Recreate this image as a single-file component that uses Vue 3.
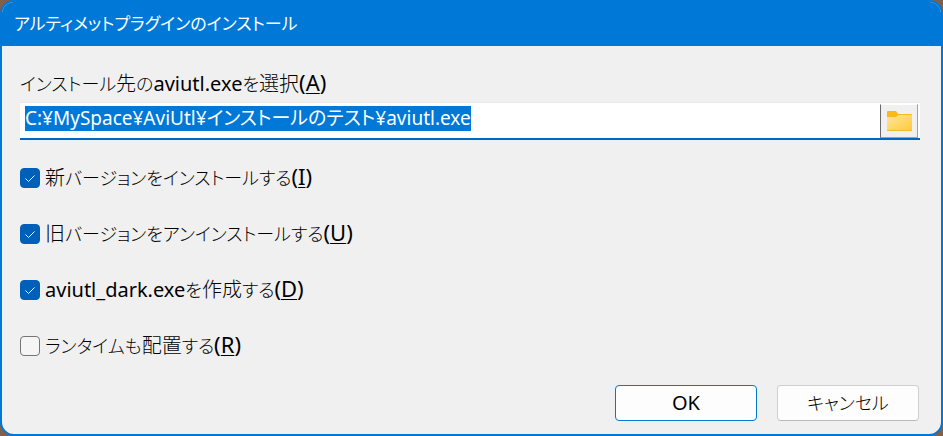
<script setup>
import { onMounted, ref } from 'vue'

const path = ref('C:¥MySpace¥AviUtl¥インストールのテスト¥aviutl.exe')
const pathInput = ref(null)

const options = ref([
  { id: 'install', file: '', kanji: '新', text: 'バージョンをインストールする', key: 'I', checked: true },
  { id: 'uninstall', file: '', kanji: '旧', text: 'バージョンをアンインストールする', key: 'U', checked: true },
  { id: 'dark', file: 'aviutl_dark.exe', lead: 'を', kanji: '作成', text: 'する', key: 'D', checked: true },
  { id: 'runtime', file: '', lead: 'ランタイムも', kanji: '配置', text: 'する', key: 'R', checked: false },
])

onMounted(() => {
  pathInput.value.focus()
  pathInput.value.select()
})
</script>

<template>
  <main class="dialog">
    <header class="titlebar">
      <h1 class="title">アルティメットプラグインのインストール</h1>
    </header>
    <form class="content" @submit.prevent>
      <label class="caption" for="path"><span class="jp">インストール<span class="kanji">先</span>の</span>aviutl.exe<span class="jp">を<span class="kanji">選択</span></span><span class="key">(<u>A</u>)</span></label>
      <div class="field">
        <input id="path" ref="pathInput" v-model="path" class="path" type="text" spellcheck="false" accesskey="a" />
        <button class="browse" type="button" aria-label="参照">
          <svg width="26" height="22" viewBox="0 0 26 22" aria-hidden="true">
            <defs>
              <linearGradient id="folder" x1="0" y1="0" x2="1" y2="1">
                <stop offset="0" stop-color="#ffe59a" />
                <stop offset="1" stop-color="#ffca3a" />
              </linearGradient>
            </defs>
            <path d="M1 2q0-1 1-1h8l2 3h13q1 0 1 1v3H1z" fill="#fbb917" />
            <path d="M1 7h9l2-2h14v15q0 1-1 1H2q-1 0-1-1z" fill="url(#folder)" />
            <path d="M1 20.500h25" stroke="#f3bd31" fill="none" />
          </svg>
        </button>
      </div>
      <div class="options">
        <label v-for="option in options" :key="option.id" class="option" :for="option.id">
          <input :id="option.id" v-model="option.checked" class="check" type="checkbox" />
          <span>{{ option.file }}<span class="jp">{{ option.lead }}<span class="kanji">{{ option.kanji }}</span>{{ option.text }}</span><span class="key">(<u>{{ option.key }}</u>)</span></span>
        </label>
      </div>
      <footer class="actions">
        <button class="button primary" type="submit">OK</button>
        <button class="button" type="button"><span class="jp">キャンセル</span></button>
      </footer>
    </form>
  </main>
</template>

<style>
body {
  background: #80604c;
}
</style>

<style scoped>
.dialog {
  box-sizing: border-box;
  display: flex;
  flex-direction: column;
  min-height: 100vh;
  overflow: hidden;
  border: 2px solid #0078d7;
  border-radius: 14px;
  background: #f0f0f0;
  color: #000;
  font-family: "Noto Sans", "Noto Sans CJK JP", sans-serif;
  font-size: 20px;
  line-height: 28px;
}

.titlebar {
  display: flex;
  align-items: center;
  height: 44px;
  padding: 0 12px;
  background: #0078d7;
  color: #fff;
}

.title {
  margin: 0;
  font-size: 17px;
  font-weight: 400;
  font-feature-settings: "palt";
}

.jp {
  font-family: "Noto Sans CJK JP", sans-serif;
  font-size: 18px;
  font-weight: 300;
  line-height: 18px;
  font-feature-settings: "palt";
}

.kanji {
  font-size: 20px;
}

.key {
  font-size: 22px;
  line-height: 22px;
}

u {
  text-decoration-thickness: 1px;
  text-underline-offset: 2px;
}

.content {
  display: flex;
  flex: 1;
  flex-direction: column;
  padding: 24px 21px 13px 18px;
}

.caption {
  align-self: flex-start;
}

.field {
  display: flex;
  height: 35px;
  margin-top: 4px;
  border-top: 1px solid #e8e8e8;
  border-bottom: 2px solid #0067c0;
  background: #fff;
}

.path {
  flex: 1;
  min-width: 0;
  padding: 0 0 5px 5px;
  border: 0;
  outline: 0;
  background: transparent;
  color: #000;
  font: inherit;
  font-size: 19px;
  line-height: 25px;
  font-feature-settings: "palt";
}

.path::selection {
  background: #0078d7;
  color: #fff;
}

.browse {
  display: flex;
  align-items: center;
  justify-content: center;
  width: 38px;
  margin: 1px 2px 0 0;
  padding: 0;
  border: 1px solid #a0a0a0;
  border-top-color: #fff;
  border-left-color: #696969;
  background: #f0f0f0;
}

.options {
  display: flex;
  flex-direction: column;
  gap: 28px;
  margin-top: 24px;
}

.option {
  display: flex;
  align-items: center;
  align-self: flex-start;
  gap: 5px;
}

.check {
  appearance: none;
  box-sizing: border-box;
  width: 20px;
  height: 20px;
  margin: 0;
  border: 1px solid #757575;
  border-radius: 4px;
  background: #f5f5f5;
}

.check:checked {
  border-color: #005fb8;
  background: #005fb8 url("data:image/svg+xml,%3Csvg xmlns='http://www.w3.org/2000/svg' viewBox='0 0 18 18'%3E%3Cpath d='M4.500 9.500l3 3 6-6' fill='none' stroke='white'/%3E%3C/svg%3E") center / 18px;
}

.actions {
  display: flex;
  justify-content: flex-end;
  gap: 20px;
  margin-top: auto;
  padding-right: 1px;
}

.button {
  box-sizing: border-box;
  width: 142px;
  height: 36px;
  padding: 0;
  border: 1px solid #d0d0d0;
  border-bottom-color: #bababa;
  border-radius: 4px;
  background: #fdfdfd;
  color: #000;
  font: inherit;
}

.button.primary {
  border-color: #0078d4;
}
</style>
